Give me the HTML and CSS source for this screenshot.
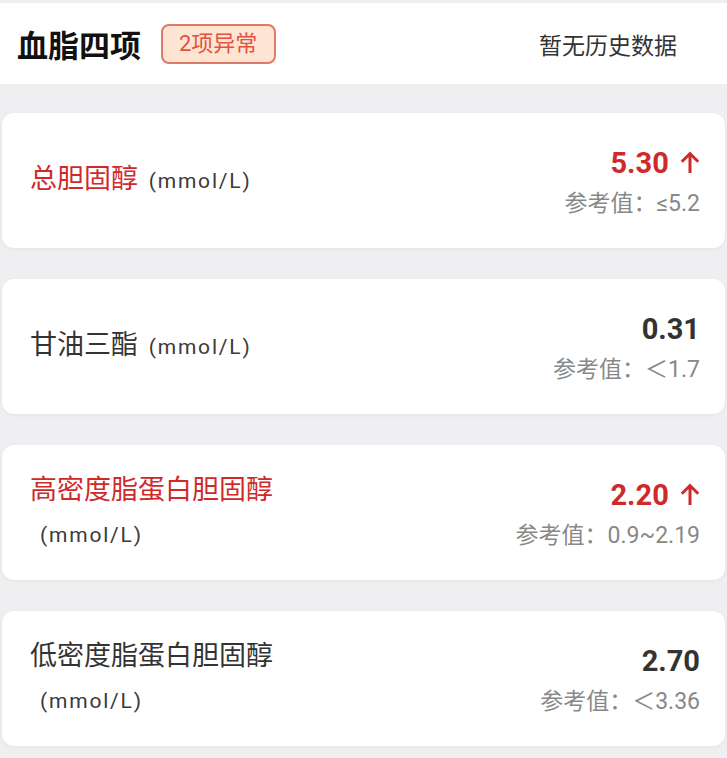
FILE: index.html
```html
<!DOCTYPE html>
<html lang="zh-CN">
<head>
    <meta charset="UTF-8">
    <meta name="viewport" content="width=device-width, initial-scale=1.0">
    <title>血脂四项</title>
    <link rel="stylesheet" href="styles.css">
</head>
<body>
    <div class="header">
        <div class="header-left">
            <h1 class="title">血脂四项</h1>
            <span class="badge">2项异常</span>
        </div>
        <span class="history">暂无历史数据</span>
    </div>

    <div class="list">
        <div class="card">
            <div class="name abnormal">总胆固醇 <span class="unit">(mmol/L)</span></div>
            <div class="result">
                <div class="value abnormal">5.30 <svg class="arrow" viewBox="0 0 20 23"><path d="M10 22V2.5M1.8 10.7L10 2.5l8.2 8.2" /></svg></div>
                <div class="ref">参考值：≤5.2</div>
            </div>
        </div>

        <div class="card">
            <div class="name">甘油三酯 <span class="unit">(mmol/L)</span></div>
            <div class="result">
                <div class="value">0.31</div>
                <div class="ref">参考值：＜1.7</div>
            </div>
        </div>

        <div class="card">
            <div class="name abnormal">高密度脂蛋白胆固醇<br><span class="unit unit-block">(mmol/L)</span></div>
            <div class="result">
                <div class="value abnormal">2.20 <svg class="arrow" viewBox="0 0 20 23"><path d="M10 22V2.5M1.8 10.7L10 2.5l8.2 8.2" /></svg></div>
                <div class="ref">参考值：0.9~2.19</div>
            </div>
        </div>

        <div class="card">
            <div class="name">低密度脂蛋白胆固醇<br><span class="unit unit-block">(mmol/L)</span></div>
            <div class="result">
                <div class="value">2.70</div>
                <div class="ref">参考值：＜3.36</div>
            </div>
        </div>
    </div>
</body>
</html>
```

FILE: styles.css
```css
body {
    margin: 0;
    padding-top: 3px;
    background-color: #efeff1;
    font-family: Roboto, "Noto Sans CJK SC", sans-serif;
    color: #333;
}

.header {
    display: flex;
    align-items: center;
    justify-content: space-between;
    height: 81px;
    padding: 0 50px 0 17px;
    background: #fff;
}

.header-left {
    display: flex;
    align-items: center;
    gap: 20px;
}

.title {
    margin: 0;
    font-size: 31px;
    font-weight: 700;
    color: #111;
}

.badge {
    padding: 2px 17px 2px 16px;
    font-size: 22px;
    line-height: 32px;
    color: #e0533f;
    background: #fde4d3;
    border: 2px solid #e07a68;
    border-radius: 8px;
}

.history {
    font-size: 23px;
    color: #333;
}

.list {
    display: flex;
    flex-direction: column;
    gap: 31px;
    padding: 29px 2px 14px 2px;
}

.card {
    display: flex;
    align-items: center;
    justify-content: space-between;
    height: 135px;
    box-sizing: border-box;
    padding: 0 25px 0 28px;
    background: #fff;
    border-radius: 12px;
    box-shadow: 0 1px 4px rgba(0, 0, 0, 0.05);
}

.name {
    font-size: 27px;
    line-height: 43px;
    color: #333;
}

.abnormal {
    color: #cf2a2a;
}

.unit {
    margin-left: 4px;
    font-size: 21px;
    letter-spacing: 1.8px;
    color: #3a3a3a;
}

.unit-block {
    margin-left: 0;
    padding-left: 10px;
}

.result {
    padding-top: 5px;
    text-align: right;
}

.value {
    font-size: 29px;
    font-weight: 700;
    line-height: 42px;
    color: #333;
}

.value.abnormal {
    color: #cf2a2a;
}

.arrow {
    width: 20px;
    height: 23px;
    margin-left: 4px;
    vertical-align: -1px;
    fill: none;
    stroke: currentColor;
    stroke-width: 3;
}

.ref {
    font-size: 23px;
    line-height: 40px;
    color: #888;
}
```
